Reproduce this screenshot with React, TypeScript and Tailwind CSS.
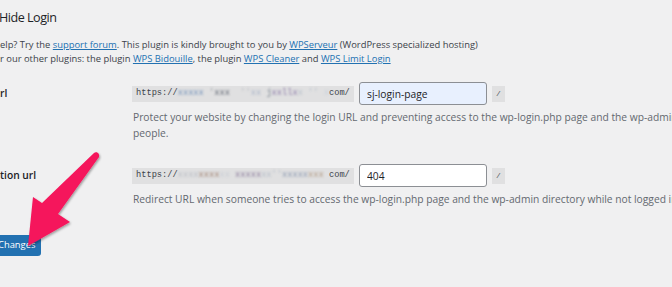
import React from "react";

const Arrow = () => (
  <svg
    className="absolute left-0 top-0 pointer-events-none"
    width="120"
    height="260"
    viewBox="0 0 120 260"
  >
    <defs>
      <filter id="sh" x="-20%" y="-20%" width="140%" height="140%">
        <feDropShadow dx="1" dy="1.5" stdDeviation="1.2" floodColor="#000" floodOpacity="0.35" />
      </filter>
    </defs>
    <path
      d="M 94 153 C 97 151 100 154 99 157 L 58 214 L 70 222 L 28 246 L 33 197 L 42 203 Z"
      fill="#f5155b"
      filter="url(#sh)"
    />
  </svg>
);

const Blur = ({ c, t }: { c: string; t: string }) => (
  <span className={`blur-[1.2px] ${c}`}>{t}</span>
);

export default function App() {
  return (
    <div
      className="relative h-[287px] w-[672px] overflow-hidden bg-[#f0f0f1] text-[#3c434a]"
      style={{ fontFamily: '"Open Sans", "Noto Sans", sans-serif' }}
    >
      <h1 className="mt-[9px] -ml-[1px] text-[12.6px] leading-[18px] font-medium tracking-[-0.5px] text-[#1d2327]">
        Hide Login
      </h1>
      <div className="mt-[11px] text-[9.4px] leading-[14px] whitespace-nowrap">
        <p>
          elp? Try the{" "}
          <a className="text-[#2271b1] underline">support forum</a>. This plugin
          is kindly brought to you by{" "}
          <a className="text-[#2271b1] underline">WPServeur</a> (WordPress
          specialized hosting)
        </p>
        <p>
          r our other plugins: the plugin{" "}
          <a className="text-[#2271b1] underline">WPS Bidouille</a>, the plugin{" "}
          <a className="text-[#2271b1] underline">WPS Cleaner</a> and{" "}
          <a className="text-[#2271b1] underline">WPS Limit Login</a>
        </p>
      </div>

      {/* Row 1 */}
      <div className="mt-[16px] flex h-[23px] items-center">
        <div className="w-[132px] text-[10.25px] font-semibold text-[#1d2327]">rl</div>
        <code
          className="flex h-[16px] w-[222px] items-center whitespace-pre bg-[#e0e0e1] pl-[4px] text-[8.7px] text-[#3c434a]"
          style={{ fontFamily: '"Liberation Mono", monospace' }}
        >
          https://
          <Blur c="text-[#6f8fb8]" t="xxxxx" />
          <Blur c="text-[#9aa0a8]" t=" '" />
          <Blur c="text-[#5d6470]" t="xxx" />
          <Blur c="text-[#b8bcc4]" t="  ''" />
          <Blur c="text-[#a9b4c8]" t="xx" />
          <Blur c="text-[#7a8290]" t=" j" />
          <Blur c="text-[#8b7aa8]" t="xxllx" />
          <Blur c="text-[#b8c0cc]" t="x ''" />
          <Blur c="text-[#c8d0dc]" t=" x" />
          com/
        </code>
        <input
          readOnly
          value="sj-login-page"
          className="ml-[5px] h-[23px] w-[128px] rounded-[3px] border border-[#8c8f94] bg-[#e8f0fe] px-[7px] text-[10.25px] text-[#1d2327] outline-none"
          style={{ fontFamily: '"Open Sans", sans-serif' }}
        />
        <code
          className="ml-[5px] flex h-[16px] w-[13px] items-center justify-center bg-[#e0e0e1] text-[8px] text-[#50575e]"
          style={{ fontFamily: '"Liberation Mono", monospace' }}
        >
          /
        </code>
      </div>
      <p className="mt-[4px] ml-[133px] text-[10.25px] leading-[16px] whitespace-nowrap text-[#646970]">
        Protect your website by changing the login URL and preventing access to
        the wp-login.php page and the wp-admin directory to non-connected
        <br />
        people.
      </p>

      {/* Row 2 */}
      <div className="mt-[23px] flex h-[23px] items-center">
        <div className="w-[132px] text-[10.25px] font-semibold text-[#1d2327]">tion url</div>
        <code
          className="flex h-[16px] w-[222px] items-center whitespace-pre bg-[#e0e0e1] pl-[4px] text-[8.7px] text-[#3c434a]"
          style={{ fontFamily: '"Liberation Mono", monospace' }}
        >
          https://
          <Blur c="text-[#b8bcc4]" t="xxxx" />
          <Blur c="text-[#a08070]" t="xxxx" />
          <Blur c="text-[#c8ccd4]" t="xx " />
          <Blur c="text-[#8a7a9a]" t="xxxxx" />
          <Blur c="text-[#b4bcc8]" t="xx''" />
          <Blur c="text-[#8a98b0]" t="xxxxx" />
          <Blur c="text-[#b09880]" t="xxx" />
          <span> </span>
          com/
        </code>
        <input
          readOnly
          value="404"
          className="ml-[5px] h-[23px] w-[128px] rounded-[3px] border border-[#8c8f94] bg-white px-[7px] text-[10.25px] text-[#1d2327] outline-none"
          style={{ fontFamily: '"Open Sans", sans-serif' }}
        />
        <code
          className="ml-[5px] flex h-[16px] w-[13px] items-center justify-center bg-[#e0e0e1] text-[8px] text-[#50575e]"
          style={{ fontFamily: '"Liberation Mono", monospace' }}
        >
          /
        </code>
      </div>
      <p className="mt-[4px] ml-[133px] text-[10.25px] leading-[16px] whitespace-nowrap text-[#646970]">
        Redirect URL when someone tries to access the wp-login.php page and the
        wp-admin directory while not logged in.
      </p>

      <button className="mt-[28px] -ml-[2px] flex h-[21px] items-center rounded-[3px] bg-[#2271b1] pr-[6px] text-[9.4px] text-white">
        Changes
      </button>

      <Arrow />
    </div>
  );
}
